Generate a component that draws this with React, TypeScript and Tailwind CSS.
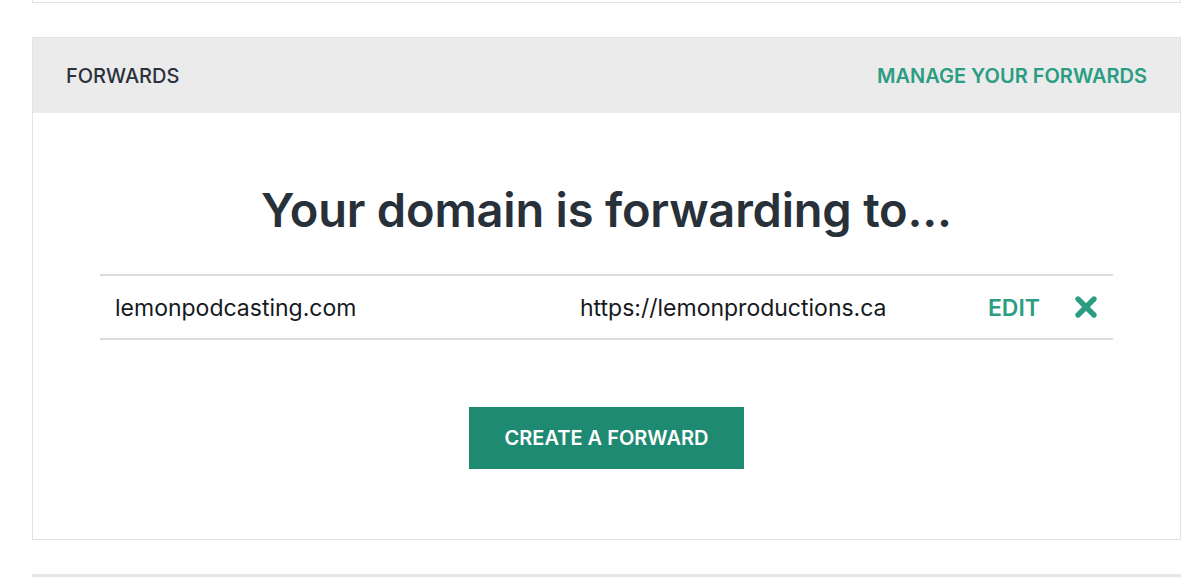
import { X } from 'lucide-react';

export default function App() {
  return (
    <div className="min-h-[578px] bg-white font-['Inter','Noto_Sans',sans-serif] overflow-hidden">
      <div className="ml-8 w-[1149px]">
        {/* bottom edge of the previous card */}
        <div className="h-[3px] border-x border-b border-[#e2e2e2]" />

        <div className="mt-[34px] border border-[#e2e2e2]">
          <div className="flex h-[75px] items-center justify-between bg-[#ebebeb] px-[33px]">
            <h3 className="text-[20px] font-medium text-[#2a323c]">FORWARDS</h3>
            <a href="#" className="text-[20px] font-semibold text-[#2a9d83]">
              MANAGE YOUR FORWARDS
            </a>
          </div>

          <div className="px-[67px] pt-[74px] pb-[70px]">
            <h2 className="text-center text-[47px] font-semibold leading-[46px] tracking-[-0.2px] text-[#28303a]">
              Your domain is forwarding to...
            </h2>

            <div className="mt-[41px] flex h-[66px] items-center border-y-2 border-[#dcdcdc] pt-[3px] pr-[11px] text-[23px] text-[#16191d]">
              <div className="w-[480px] pl-[15px]">lemonpodcasting.com</div>
              <div className="flex-1">https://lemonproductions.ca</div>
              <a href="#" className="font-semibold text-[#2a9d83]">
                EDIT
              </a>
              <button className="ml-[30px] -mt-[3px] text-[#2a9d83]">
                <X size={32} strokeWidth={4} />
              </button>
            </div>

            <div className="mt-[67px] flex justify-center">
              <button className="h-[62px] w-[275px] bg-[#1f8a72] text-[20px] font-semibold text-white">
                CREATE A FORWARD
              </button>
            </div>
          </div>
        </div>

        {/* top of the next card */}
        <div className="mt-[34px] h-[10px] border-t-[3px] border-[#e6e6e6] bg-[#fafafa]" />
      </div>
    </div>
  );
}
